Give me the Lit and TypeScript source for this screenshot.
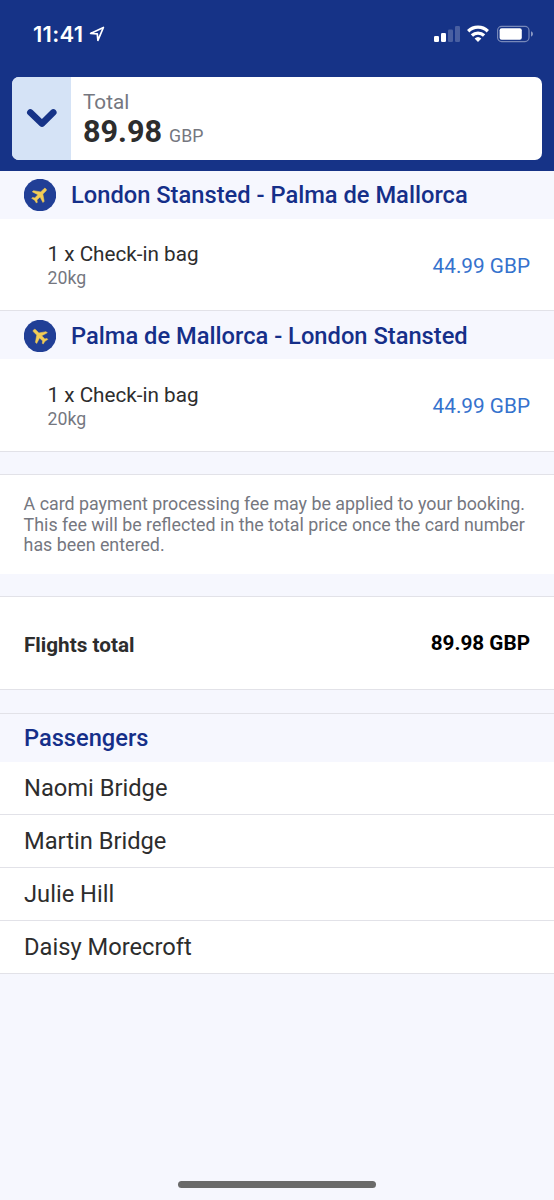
import { LitElement, html, css } from "lit";
import { customElement, property } from "lit/decorators.js";

@customElement("flight-leg")
class FlightLeg extends LitElement {
  @property() route = "";
  @property({ type: Boolean, reflect: true }) inbound = false;

  static styles = css`
    :host { display: block; flex: none; }
    .heading {
      display: flex; align-items: center; gap: 15px; height: 48px;
      box-sizing: border-box; padding: 0 24px; background: #f6f7fe; color: #152f89;
      font-size: 23.7px; font-weight: 500; white-space: nowrap;
    }
    :host([inbound]) .heading { padding-top: 1px; }
    .badge { flex: none; width: 32px; height: 32px; display: block; }
    .row {
      display: flex; align-items: center; justify-content: space-between;
      box-sizing: border-box; height: 92px; padding: 2px 24px 0 47.5px;
      background: #fff; border-bottom: 1px solid #e2e2e8;
    }
    :host([inbound]) .row { height: 93px; }
    .bag { font-size: 20.7px; line-height: 24px; color: #2d2d2d; padding-top: 1px; }
    .weight { font-size: 17.7px; line-height: 24px; color: #75777f; }
    .price { font-size: 20.75px; color: #3572cd; }
  `;

  render() {
    return html`
      <div class="heading">
        <svg class="badge" viewBox="0 0 32 32">
          <circle cx="16" cy="16" r="16.2" fill="#213f96" />
          <g transform=${this.inbound ? "translate(15.6 15.8) scale(-1 1)" : "translate(16 15.8)"}>
            <path transform="rotate(45) scale(.84) translate(-11.5 -12)" fill="#f3cc55"
              stroke="#f3cc55" stroke-width=".6" stroke-linejoin="round"
              d="M20.5 16v-2l-7.2-5V3.5c0-.9-.8-1.5-1.8-1.5S9.7 2.6 9.7 3.5V9l-7.2 5v2l7.2-2.3V19l-2.2 1.5V22l4-1 4 1v-1.5L13.3 19v-5.3z" />
          </g>
        </svg>
        <span>${this.route}</span>
      </div>
      <div class="row">
        <div>
          <div class="bag">1 x Check-in bag</div>
          <div class="weight">20kg</div>
        </div>
        <div class="price">44.99 GBP</div>
      </div>
    `;
  }
}

@customElement("app-root")
class AppRoot extends LitElement {
  private passengers = ["Naomi Bridge", "Martin Bridge", "Julie Hill", "Daisy Morecroft"];

  static styles = css`
    :host {
      display: flex; flex-direction: column; box-sizing: border-box;
      width: 554px; height: 1200px; overflow: hidden; background: #f6f7fe;
      font-family: Roboto, sans-serif; color: #2d2d2d;
    }
    .top { flex: none; height: 171px; background: #163387; }
    .status {
      display: flex; align-items: center; justify-content: space-between;
      height: 68px; padding: 0 21px 0 33px; color: #fff;
    }
    .clock {
      display: flex; align-items: center; gap: 6px;
      font: 600 22px/24px Inter, sans-serif; letter-spacing: 0.3px;
    }
    .arrow { width: 16px; height: 16px; }
    .indicators { width: 100px; height: 20px; }
    .total {
      display: flex; height: 82.5px; margin: 9px 12px 0; overflow: hidden;
      border-radius: 7px; background: #fff;
    }
    .toggle {
      width: 59px; background: #d5e3f6; display: flex;
      align-items: center; justify-content: center;
    }
    .chevron { width: 32px; height: 22px; }
    .sum { padding: 12px 0 0 12px; }
    .label { font-size: 20.7px; line-height: 26px; color: #75777f; }
    .amount {
      display: flex; align-items: baseline; gap: 7px;
      line-height: 32px; padding-top: 1px;
    }
    .value { font-size: 30.6px; font-weight: 700; }
    .currency { font-size: 17.7px; color: #75777f; }
    .gap {
      flex: none; box-sizing: border-box; height: 23px;
      border-bottom: 1px solid #e2e2e8;
    }
    .gap.wide { height: 24px; }
    .fee {
      flex: none; box-sizing: border-box; height: 99px; padding: 19.3px 24px 0 23.6px;
      background: #fff; color: #75777f; font-size: 17.84px; line-height: 20.6px;
      white-space: nowrap;
    }
    .grand {
      flex: none; box-sizing: border-box; height: 93px; padding: 4px 24px 0;
      display: flex; align-items: center; justify-content: space-between;
      background: #fff; border-bottom: 1px solid #e2e2e8;
      font-size: 20.7px; font-weight: 700;
    }
    .figure { color: #000; padding-bottom: 4px; }
    .title {
      flex: none; height: 48px; line-height: 48px; padding: 0 24px;
      color: #152f89; font-size: 23.65px; font-weight: 500;
    }
    .person {
      flex: none; box-sizing: border-box; height: 53px; line-height: 53px;
      padding: 0 24px; background: #fff; border-bottom: 1px solid #e2e2e8;
      font-size: 23.7px;
    }
    .home {
      flex: none; width: 198px; height: 7px; margin: auto auto 12px;
      border-radius: 4px; background: #6a6a6a;
    }
  `;

  render() {
    return html`
      <header class="top">
        <div class="status">
          <div class="clock">
            <span>11:41</span>
            <svg class="arrow" viewBox="0 0 16 16">
              <path d="M1.6 7.4 14.4 1.5 8.9 14.3 8.3 7.9z" fill="none" stroke="#fff"
                stroke-width="1.7" stroke-linejoin="round" />
            </svg>
          </div>
          <svg class="indicators" viewBox="433 24 100 20">
            <g fill="#fff">
              <rect x="434" y="36" width="5" height="6" rx="1.3" />
              <rect x="441" y="33" width="5" height="9" rx="1.3" />
              <rect x="448" y="29.5" width="5" height="12.5" rx="1.3" opacity=".22" />
              <rect x="455" y="26" width="5" height="16" rx="1.3" opacity=".22" />
            </g>
            <g fill="none" stroke="#fff" stroke-width="3.3">
              <path d="M468.2 31.2a14 14 0 0 1 19.6 0" />
              <path d="M471.9 35.5a8.8 8.8 0 0 1 12.2 0" />
            </g>
            <path d="M474.6 38.5a5 5 0 0 1 6.8 0L478 42z" fill="#fff" />
            <rect x="497.6" y="26.4" width="31.4" height="15.2" rx="4" fill="none"
              stroke="#fff" stroke-opacity=".42" stroke-width="1.2" />
            <rect x="499.6" y="28.3" width="22.2" height="11.4" rx="2" fill="#fff" />
            <path d="M531 31.3q2 .8 2 2.7t-2 2.7z" fill="#fff" opacity=".5" />
          </svg>
        </div>
        <div class="total">
          <div class="toggle">
            <svg class="chevron" viewBox="0 0 32 22">
              <path d="M4.3 5.4 16 16.6 27.3 5.4" fill="none" stroke="#163387"
                stroke-width="6.5" stroke-linecap="round" stroke-linejoin="round" />
            </svg>
          </div>
          <div class="sum">
            <div class="label">Total</div>
            <div class="amount"><span class="value">89.98</span><span class="currency">GBP</span></div>
          </div>
        </div>
      </header>
      <flight-leg route="London Stansted - Palma de Mallorca"></flight-leg>
      <flight-leg route="Palma de Mallorca - London Stansted" inbound></flight-leg>
      <div class="gap"></div>
      <div class="fee">
        A card payment processing fee may be applied to your booking.<br />
        This fee will be reflected in the total price once the card number<br />
        has been entered.
      </div>
      <div class="gap"></div>
      <div class="grand"><span>Flights total</span><span class="figure">89.98 GBP</span></div>
      <div class="gap wide"></div>
      <div class="title">Passengers</div>
      ${this.passengers.map((name) => html`<div class="person">${name}</div>`)}
      <div class="home"></div>
    `;
  }
}
